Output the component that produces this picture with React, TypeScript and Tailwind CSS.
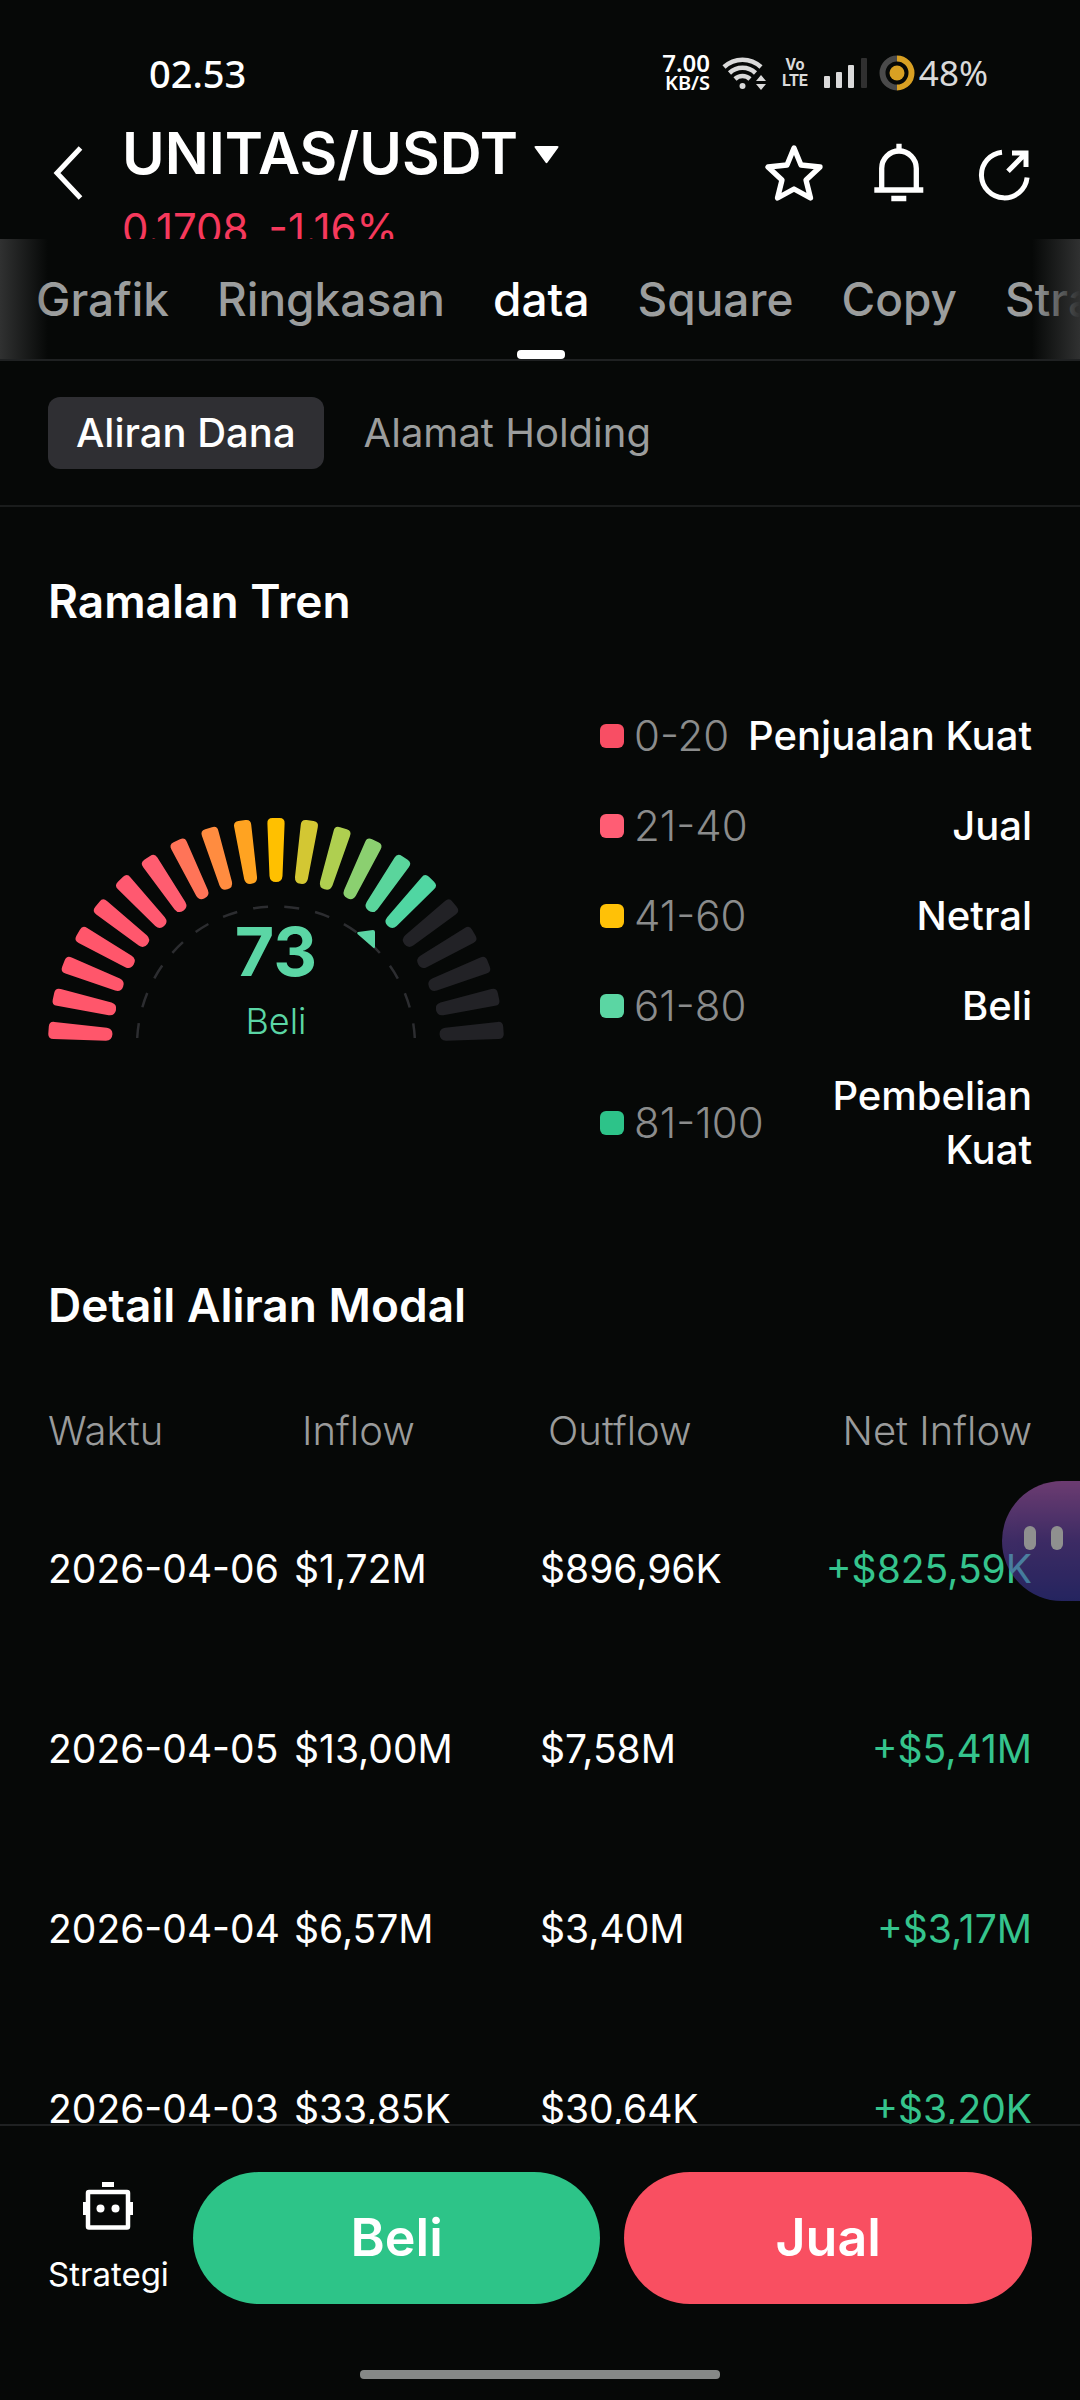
import React from "react";

const tabs = ["Grafik", "Ringkasan", "data", "Square", "Copy", "Strategi"];

const legend = [
  { range: "0-20", label: "Penjualan Kuat", color: "bg-[#f84e64]" },
  { range: "21-40", label: "Jual", color: "bg-[#ff5d74]" },
  { range: "41-60", label: "Netral", color: "bg-[#ffc107]" },
  { range: "61-80", label: "Beli", color: "bg-[#5bd6a3]" },
  { range: "81-100", label: "Pembelian Kuat", color: "bg-[#2dc389]" },
];

const flows = [
  { date: "2026-04-06", inflow: "$1,72M", outflow: "$896,96K", net: "+$825,59K" },
  { date: "2026-04-05", inflow: "$13,00M", outflow: "$7,58M", net: "+$5,41M" },
  { date: "2026-04-04", inflow: "$6,57M", outflow: "$3,40M", net: "+$3,17M" },
  { date: "2026-04-03", inflow: "$33,85K", outflow: "$30,64K", net: "+$3,20K" },
];

// one colour per gauge tick, left to right
const ticks = [
  "#ff566b", "#ff566b", "#ff566b", "#ff566b", "#ff576d", "#ff5970", "#ff5d70",
  "#ff7458", "#ff8c40", "#ffa321", "#ffc000", "#d3c733", "#afcf50", "#8bd070",
  "#5ad59c", "#50d6a2", "#222226", "#222226", "#222226", "#222226", "#222226",
];

const StatusBar = () => (
  <div className="flex h-[107px] shrink-0 items-center justify-between pt-[38px] pr-[92px] pl-[149px] font-['Noto_Sans',sans-serif]">
    <span className="text-[38px] leading-10 font-medium">02.53</span>
    <div className="flex items-center text-[#dadada]">
      <div className="mr-3 flex flex-col items-end font-semibold text-white">
        <span className="text-2xl leading-5">7.00</span>
        <span className="text-xl leading-5">KB/S</span>
      </div>
      {/* WIFI */}
      <svg width="44" height="36" viewBox="0 0 44 36" fill="none" stroke="currentColor" strokeWidth="4.5">
        <path d="M2 12 A27 27 0 0 1 39 12" />
        <path d="M7.500 18 A19 19 0 0 1 33.500 18" />
        <path d="M13 24 A11 11 0 0 1 28 24" />
        <circle cx="20.500" cy="31" r="3" fill="currentColor" stroke="none" />
        <path d="M34 26 L39 20 L44 26 Z M34 29 L39 35 L44 29 Z" fill="currentColor" stroke="none" />
      </svg>
      <div className="mx-4 flex flex-col items-center font-[Roboto,sans-serif] text-base leading-4 font-bold">
        <span>Vo</span>
        <span>LTE</span>
      </div>
      {/* SIGNAL */}
      <svg width="43" height="30" viewBox="0 0 43 30" fill="currentColor">
        <rect x="0" y="18" width="6" height="12" rx="1" />
        <rect x="12" y="14" width="6" height="16" rx="1" />
        <rect x="24" y="7" width="6" height="23" rx="1" />
        <rect x="37" y="0" width="6" height="30" rx="1" fill="#303030" />
      </svg>
      {/* BATTERY */}
      <svg className="mr-1 ml-3" width="36" height="36" viewBox="0 0 36 36" fill="none" strokeWidth="6">
        <path d="M18 3.500 A14.500 14.500 0 0 0 18 32.500" stroke="#4a4a4a" />
        <path d="M18 3.500 A14.500 14.500 0 0 1 18 32.500" stroke="#d8a023" />
        <circle cx="18" cy="18" r="7.500" fill="#d8a023" />
      </svg>
      <span className="text-[35px] leading-10">48%</span>
    </div>
  </div>
);

const Header = () => (
  <header className="flex h-[132px] shrink-0 items-center overflow-hidden pr-[46px] pl-12">
    <button aria-label="Kembali" className="mr-[38px] shrink-0">
      <svg width="36" height="60" viewBox="0 0 36 60" fill="none" stroke="currentColor" strokeWidth="5">
        <path d="M32.500 5 L9 30 L32.500 55" />
      </svg>
    </button>
    <div className="flex flex-1 flex-col gap-6 self-start pt-3.5">
      <button className="flex items-center gap-4 text-[58px] leading-16 font-semibold">
        UNITAS/USDT
        <svg className="mt-1" width="25" height="18" viewBox="0 0 25 18" fill="currentColor">
          <path d="M2 0 H23 Q25.500 0 24 2 L13.500 16.500 Q12.500 18 11.500 16.500 L1 2 Q-0.500 0 2 0 Z" />
        </svg>
      </button>
      <div className="flex gap-5 text-[42px] leading-10 text-[#f6395c]">
        <span>0.1708</span>
        <span>-1.16%</span>
      </div>
    </div>
    <div className="flex shrink-0 gap-[45px]">
      <button aria-label="Favorit">
        <svg width="60" height="60" viewBox="0 0 60 60" fill="none" stroke="currentColor" strokeWidth="5.300" strokeLinejoin="round">
          <path d="M30 5 L37 22 L56 24 L42 37 L46.500 55 L30 46 L13.500 55 L18 37 L4 24 L23 22 Z" />
        </svg>
      </button>
      <button aria-label="Notifikasi">
        <svg width="60" height="60" viewBox="0 0 60 60" fill="none" stroke="currentColor" strokeWidth="5.300">
          <path d="M12.700 46 V25.300 A17.300 17.300 0 0 1 47.300 25.300 V46" />
          <path d="M5.300 47 H54.300 M22.300 55.500 H37.300 M30 0.700 V8" />
        </svg>
      </button>
      <button aria-label="Bagikan">
        <svg width="60" height="60" viewBox="0 0 60 60" fill="none" stroke="currentColor" strokeWidth="5">
          <path d="M28 9.200 A22.900 22.900 0 1 0 53.100 34.500" />
          <path d="M34 28.300 L52 10 M38 10 H52 V24" />
        </svg>
      </button>
    </div>
  </header>
);

const TabBar = () => (
  <nav className="relative shrink-0 overflow-hidden border-b-2 border-[#1f2122]">
    <div className="flex h-[120px] gap-12 pl-9 text-[46px] font-medium text-[#9b9d9d]">
      {tabs.map((tab) => (
        <button
          key={tab}
          className={`relative flex h-full shrink-0 items-center ${tab === "data" ? "text-white" : ""}`}
        >
          {tab}
          {tab === "data" && (
            <span className="absolute bottom-0 left-1/2 h-[9px] w-12 -translate-x-1/2 rounded bg-white" />
          )}
        </button>
      ))}
    </div>
    {/* edge fades */}
    <div className="pointer-events-none absolute inset-y-0 left-0 w-12 bg-linear-to-r from-[#303131] to-transparent" />
    <div className="pointer-events-none absolute inset-y-0 right-0 w-12 bg-linear-to-l from-[#303131] to-transparent" />
  </nav>
);

const Gauge = () => (
  <div className="grid w-[456px] shrink-0">
    <svg className="col-start-1 row-start-1" width="456" height="250" viewBox="0 0 456 250">
      {ticks.map((color, i) => (
        <path
          key={i}
          transform={`rotate(${(i - 10) * 8.6} 228 228)`}
          d="M224.500 0 H231.500 Q237 0 236.600 5.500 L234.500 58 Q234 64 228 64 Q222 64 221.500 58 L219.400 5.500 Q219 0 224.500 0 Z"
          fill={color}
        />
      ))}
      <path
        d="M89.200 220 A139 139 0 0 1 366.800 220"
        fill="none"
        stroke="#2c2d30"
        strokeWidth="2.500"
        strokeDasharray="15 16.300"
      />
      <path d="M310 114 L325 112 Q327 112 327 114 L327 129 Q326.500 131 325 129.500 L309.500 116 Q308.500 114.500 310 114 Z" fill="#5bd6a5" />
    </svg>
    <div className="col-start-1 row-start-1 flex flex-col items-center gap-4 pt-[99px] text-[#5bd6a5]">
      <span className="text-[68px] leading-[68px] font-bold">73</span>
      <span className="text-4xl leading-10 font-light">Beli</span>
    </div>
  </div>
);

const TrendForecast = () => (
  <section>
    <h2 className="text-[46px] leading-14 font-semibold">Ramalan Tren</h2>
    <div className="mt-20 flex items-center gap-24">
      <Gauge />
      <ul className="flex flex-1 flex-col gap-9 text-[40px] leading-[54px]">
        {legend.map((item) => (
          <li key={item.range} className="flex items-center">
            <span className={`mr-2.5 size-6 shrink-0 rounded-md ${item.color}`} />
            <span className="mr-2 shrink-0 text-[42px] font-light text-[#8b8c8c]">{item.range}</span>
            <span className="flex-1 text-right font-medium">{item.label}</span>
          </li>
        ))}
      </ul>
    </div>
  </section>
);

const FlowTable = () => (
  <section className="mt-[100px]">
    <h2 className="text-[46px] leading-14 font-semibold">Detail Aliran Modal</h2>
    <table className="mt-[50px] w-full table-fixed text-left whitespace-nowrap">
      <thead>
        <tr className="h-24 text-[40px] text-[#9a9b9b]">
          <th className="font-light">Waktu</th>
          <th className="pl-2 font-light">Inflow</th>
          <th className="pl-2 font-light">Outflow</th>
          <th className="text-right font-light">Net Inflow</th>
        </tr>
      </thead>
      <tbody className="text-[39px]">
        {flows.map((row) => (
          <tr key={row.date} className="h-[180px]">
            <td>{row.date}</td>
            <td>{row.inflow}</td>
            <td>{row.outflow}</td>
            <td className="text-right text-[#35c48d]">{row.net}</td>
          </tr>
        ))}
      </tbody>
    </table>
  </section>
);

const BottomBar = () => (
  <footer className="flex shrink-0 flex-col border-t-2 border-[#1f2122] px-12 pt-[46px] pb-[21px]">
    <div className="flex items-center gap-6">
      <button className="flex flex-col items-center gap-6 text-[33px] leading-10">
        <svg width="50" height="48" viewBox="0 0 50 48" fill="currentColor">
          <rect x="19" y="0" width="12" height="5" />
          <rect x="5" y="10" width="40" height="35.500" rx="1" fill="none" stroke="currentColor" strokeWidth="4.500" />
          <rect x="0" y="20" width="4" height="13" />
          <rect x="46" y="20" width="4" height="13" />
          <circle cx="17.500" cy="26.500" r="4" />
          <circle cx="32.500" cy="26.500" r="4" />
        </svg>
        Strategi
      </button>
      <button className="h-[132px] flex-1 rounded-full bg-[#2dc488] text-[52px] font-semibold">Beli</button>
      <button className="h-[132px] flex-1 rounded-full bg-[#f94f61] text-[52px] font-semibold">Jual</button>
    </div>
    <div className="mt-[66px] h-[9px] w-[360px] self-center rounded bg-[#868887]" />
  </footer>
);

const App = () => {
  return (
    <div className="flex h-screen flex-col bg-[#060807] font-[Inter,sans-serif] text-white">
      <StatusBar />
      <Header />
      <TabBar />
      <div className="flex shrink-0 gap-3 border-b-2 border-[#1a1c1c] px-12 py-9 text-[40px]">
        <button className="h-[72px] rounded-xl bg-[#2f2f33] px-7 font-medium">Aliran Dana</button>
        <button className="h-[72px] px-7 text-[#9b9d9d]">Alamat Holding</button>
      </div>
      <div className="relative min-h-0 flex-1">
        <main className="h-full overflow-hidden px-12 pt-[66px]">
          <TrendForecast />
          <FlowTable />
        </main>
        {/* assistant bubble docked on the edge */}
        <button
          aria-label="Asisten"
          className="absolute right-0 bottom-[523px] flex h-[120px] w-[78px] gap-[15px] rounded-l-[60px] bg-linear-to-b from-[#c066c8] via-[#6a48b0] to-[#3e3ca8] pt-[45px] pl-[22px] opacity-55"
        >
          <span className="h-6 w-3 rounded-full bg-white" />
          <span className="h-6 w-3 rounded-full bg-white" />
        </button>
      </div>
      <BottomBar />
    </div>
  );
};

export default App;
